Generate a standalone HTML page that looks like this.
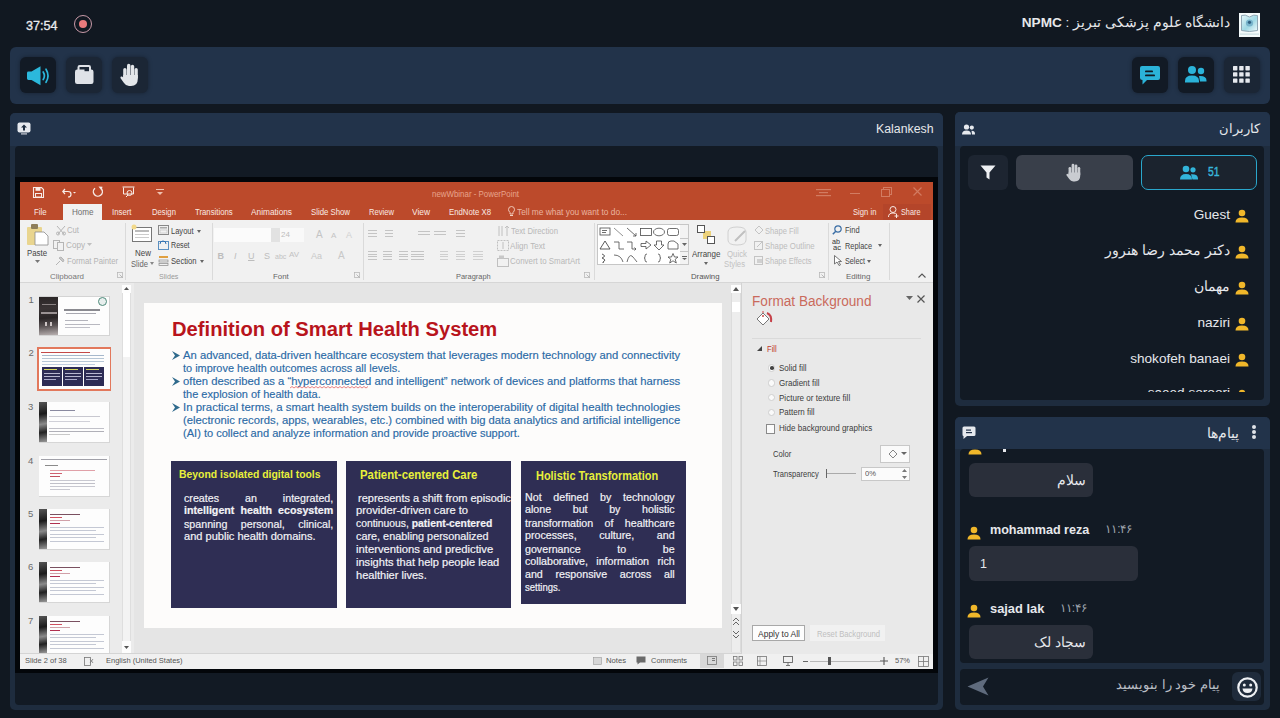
<!DOCTYPE html>
<html><head><meta charset="utf-8">
<style>
*{box-sizing:border-box;margin:0;padding:0}
html,body{width:1280px;height:718px;overflow:hidden;background:#111821;font-family:"Liberation Sans",sans-serif;position:relative}
.a{position:absolute}
.t{position:absolute;white-space:nowrap}
svg{overflow:visible}
</style></head><body>
<div class="t" style="left:26.0px;top:20.1px;font-size:12.5px;line-height:12.5px;color:#e9ebee;transform:scaleX(1.0070);transform-origin:0 0;-webkit-text-stroke:0.3px #e9ebee;">37:54</div>
<div class="a" style="left:74px;top:15px;width:18px;height:18px;border-radius:50%;border:1.6px solid #c99aa8"></div>
<div class="a" style="left:79px;top:20px;width:8px;height:8px;border-radius:50%;background:#e97a7c"></div>
<div class="t" style="right:49.5px;top:14.5px;font-size:13.6px;line-height:16px;color:#e6e8eb;direction:rtl">دانشگاه علوم پزشکی تبریز : <b>NPMC</b></div>
<div class="a" style="left:1239px;top:13px;width:21px;height:24px;background:#f4fafb;"></div>
<svg class="a" style="left:1239px;top:13px;" width="21" height="24" viewBox="0 0 21 24"><defs><linearGradient id="lg" x1="0" y1="0" x2="1" y2="1"><stop offset="0" stop-color="#e4f5f8"/><stop offset=".55" stop-color="#9fd8e4"/><stop offset="1" stop-color="#f0fafc"/></linearGradient></defs><path d="M2.5 2.5 Q6 1 10.5 4 Q15 1 18.5 2.5 V17.5 Q10.5 19.5 2.5 17.5 Z" fill="url(#lg)" stroke="#8fa6b4" stroke-width="1"/><circle cx="10.5" cy="10" r="3.6" fill="#78b4cc"/><circle cx="10.5" cy="9.3" r="1.6" fill="#2e5f80"/><rect x="1" y="20.5" width="19" height="1.2" fill="#c9dde2"/></svg>
<div class="a" style="left:10px;top:47px;width:1260px;height:57px;background:#22334a;border-radius:6px"></div>
<div class="a" style="left:20px;top:57px;width:36px;height:36px;border-radius:6px;background:#121a25;box-shadow:0 0 4px rgba(0,0,0,.35)"></div>
<div class="a" style="left:66px;top:57px;width:36px;height:36px;border-radius:6px;background:#1b2635;box-shadow:0 0 4px rgba(0,0,0,.35)"></div>
<div class="a" style="left:112px;top:57px;width:36px;height:36px;border-radius:6px;background:#1b2635;box-shadow:0 0 4px rgba(0,0,0,.35)"></div>
<div class="a" style="left:1132px;top:57px;width:36px;height:36px;border-radius:6px;background:#121a25;box-shadow:0 0 4px rgba(0,0,0,.35)"></div>
<div class="a" style="left:1178px;top:57px;width:36px;height:36px;border-radius:6px;background:#121a25;box-shadow:0 0 4px rgba(0,0,0,.35)"></div>
<div class="a" style="left:1224px;top:57px;width:36px;height:36px;border-radius:6px;background:#1b2635;box-shadow:0 0 4px rgba(0,0,0,.35)"></div>
<svg class="a" style="left:27px;top:66px;" width="23" height="20" viewBox="0 0 23 20"><path d="M0 7 Q0 5.6 1.4 5.6 H4.5 L13.5 0.3 V19.2 L4.5 13.9 H1.4 Q0 13.9 0 12.5 Z" fill="#2bb8dc"/><path d="M16.2 6 Q18.6 9.75 16.2 13.5" stroke="#2bb8dc" stroke-width="1.7" fill="none" stroke-linecap="round"/><path d="M19 3.2 Q23 9.75 19 16.3" stroke="#2bb8dc" stroke-width="1.7" fill="none" stroke-linecap="round"/></svg>
<svg class="a" style="left:75px;top:65px;" width="19" height="20" viewBox="0 0 19 20"><rect x="0" y="4.5" width="18.5" height="14.5" rx="2.2" fill="#dfe2e7"/><path d="M3.5 5 V2.2 Q3.5 1 4.7 1 H13.8 Q15 1 15 2.2 V5" fill="none" stroke="#dfe2e7" stroke-width="2"/><rect x="9.5" y="3" width="4.5" height="3.2" fill="#1b2635"/></svg>
<svg class="a" style="left:120px;top:63px;" width="20" height="24" viewBox="0 0 20 24"><g fill="#e3e6ea"><rect x="3.2" y="5" width="3.4" height="11" rx="1.7"/><rect x="7" y="0.8" width="3.4" height="14" rx="1.7"/><rect x="10.8" y="1.8" width="3.4" height="13" rx="1.7"/><rect x="14.5" y="5" width="3.3" height="11" rx="1.65"/><path d="M3.2 12 H17.8 V16 Q17.8 23 11 23 H9 Q6 23 4 20 L0.6 15.2 Q0 14 1.2 13.6 Q2.3 13.3 3.2 14.5 Z"/></g></svg>
<svg class="a" style="left:1139px;top:64px;" width="22" height="22" viewBox="0 0 22 22"><path d="M3 2 H19 Q21 2 21 4 V14 Q21 16 19 16 H8 L3.5 20.5 V16 Q1 16 1 14 V4 Q1 2 3 2 Z" fill="#2bb3d9"/><rect x="6" y="6.5" width="8" height="1.8" rx=".9" fill="#121a25"/><rect x="6" y="10.5" width="10" height="1.8" rx=".9" fill="#121a25"/></svg>
<svg class="a" style="left:1184px;top:64px;" width="24" height="22" viewBox="0 0 24 22"><circle cx="8" cy="6" r="4" fill="#2bb3d9"/><circle cx="17" cy="7" r="3.2" fill="#2bb3d9"/><path d="M1 17 Q1 11.5 8 11.5 Q15 11.5 15 17 V18.5 H1 Z" fill="#2bb3d9"/><path d="M15 12 Q22.5 11.5 22.5 16.5 V17.5 H16" fill="#2bb3d9"/></svg>
<svg class="a" style="left:1233px;top:66px;" width="18" height="18" viewBox="0 0 18 18"><rect x="0.0" y="0.0" width="4.4" height="4.4" rx=".6" fill="#e6e9ee"/><rect x="6.2" y="0.0" width="4.4" height="4.4" rx=".6" fill="#e6e9ee"/><rect x="12.4" y="0.0" width="4.4" height="4.4" rx=".6" fill="#e6e9ee"/><rect x="0.0" y="6.2" width="4.4" height="4.4" rx=".6" fill="#e6e9ee"/><rect x="6.2" y="6.2" width="4.4" height="4.4" rx=".6" fill="#e6e9ee"/><rect x="12.4" y="6.2" width="4.4" height="4.4" rx=".6" fill="#e6e9ee"/><rect x="0.0" y="12.4" width="4.4" height="4.4" rx=".6" fill="#e6e9ee"/><rect x="6.2" y="12.4" width="4.4" height="4.4" rx=".6" fill="#e6e9ee"/><rect x="12.4" y="12.4" width="4.4" height="4.4" rx=".6" fill="#e6e9ee"/></svg>
<div class="a" style="left:10px;top:113px;width:933px;height:597px;background:#1e2c3e;border-radius:5px"></div>
<div class="a" style="left:10px;top:113px;width:933px;height:33px;background:#22334a;border-radius:5px 5px 0 0"></div>
<div class="t" style="left:876.0px;top:123.2px;font-size:12px;line-height:12px;color:#e6e8eb;transform:scaleX(1.0260);transform-origin:0 0;">Kalankesh</div>
<svg class="a" style="left:17px;top:122px;" width="14" height="13" viewBox="0 0 14 13"><rect x=".5" y=".5" width="13" height="10" rx="2" fill="#e6e9ee"/><path d="M7 2.5 L10 5.5 H8 V8.5 H6 V5.5 H4 Z" fill="#1e2d40"/><rect x="4" y="11.3" width="6" height="1.2" fill="#c9ced6"/></svg>
<div class="a" style="left:15px;top:146px;width:923px;height:559px;background:#121a24;border-radius:4px"></div>
<div class="a" style="left:15px;top:177px;width:923px;height:496px;background:#03060a;"></div>
<div class="a" style="left:955px;top:112px;width:315px;height:294px;background:#1e2c3e;border-radius:5px"></div>
<div class="a" style="left:955px;top:112px;width:315px;height:34px;background:#22334a;border-radius:5px 5px 0 0"></div>
<div class="a" style="left:960px;top:146px;width:304px;height:254px;background:#121a24;border-radius:4px"></div>
<div class="a" style="left:955px;top:417px;width:315px;height:293px;background:#1e2c3e;border-radius:5px"></div>
<div class="a" style="left:955px;top:417px;width:315px;height:32px;background:#22334a;border-radius:5px 5px 0 0"></div>
<div class="a" style="left:960px;top:449px;width:304px;height:214px;background:#121a24;border-radius:4px"></div>
<div class="a" style="left:960px;top:669px;width:304px;height:36px;background:#121a24;border-radius:4px"></div>
<div class="a" style="left:20px;top:182px;width:913px;height:487px;background:#e4e4e4;"></div>
<div class="a" style="left:20px;top:182px;width:913px;height:38px;background:#bc4a2b;"></div>
<div class="a" style="left:883px;top:204px;width:48px;height:16px;background:#b4452a;"></div>
<div class="a" style="left:63px;top:204px;width:39px;height:16px;background:#f1f1f1;"></div>
<div class="a" style="left:20px;top:220px;width:913px;height:62px;background:#f1f1f1;"></div>
<div class="a" style="left:20px;top:282px;width:913px;height:1px;background:#d6d6d6;"></div>
<svg class="a" style="left:33px;top:187px;" width="11" height="11" viewBox="0 0 11 11"><path d="M.5 .5 H8.5 L10.5 2.5 V10.5 H.5 Z" fill="none" stroke="#f8ece7" stroke-width="1.1"/><rect x="2.5" y=".8" width="5" height="3" fill="#f8ece7"/><rect x="2.5" y="6.5" width="6" height="3.5" fill="none" stroke="#f8ece7" stroke-width="1"/></svg>
<svg class="a" style="left:62px;top:187px;" width="14" height="11" viewBox="0 0 14 11"><path d="M3 2 L.8 4.5 L3 7" fill="none" stroke="#f8ece7" stroke-width="1.2"/><path d="M1 4.5 H6 Q9 4.5 9 7.2 Q9 10 6 10" fill="none" stroke="#f8ece7" stroke-width="1.2"/><path d="M11 5 L12.5 6.5 L14 5" fill="#f8ece7"/></svg>
<svg class="a" style="left:92px;top:186px;" width="12" height="12" viewBox="0 0 12 12"><path d="M3 2.2 A4.5 4.5 0 1 0 9.5 3" fill="none" stroke="#f8ece7" stroke-width="1.4"/><path d="M6.5 .5 L10.5 .8 L9.5 4.5 Z" fill="#f8ece7"/></svg>
<svg class="a" style="left:122px;top:186px;" width="13" height="12" viewBox="0 0 13 12"><rect x=".5" y=".5" width="12" height="1" fill="#f8ece7"/><path d="M1.5 1.5 V8 H11.5 V1.5" fill="none" stroke="#f8ece7" stroke-width="1"/><circle cx="7.5" cy="7" r="2.5" fill="none" stroke="#f8ece7" stroke-width="1"/><path d="M4 11 L6 9" stroke="#f8ece7"/></svg>
<svg class="a" style="left:156px;top:189px;" width="8" height="6" viewBox="0 0 8 6"><rect x="0" y="0" width="8" height="1" fill="#f0c2b0"/><path d="M1 3 H7 L4 6 Z" fill="#f0c2b0"/></svg>
<div class="t" style="left:432.0px;top:189.9px;font-size:8.5px;line-height:8.5px;color:#e8a48c;transform:scaleX(0.9301);transform-origin:0 0;">newWbinar - PowerPoint</div>
<svg class="a" style="left:816px;top:189px;" width="15" height="8" viewBox="0 0 15 8"><rect x="0" y="0" width="15" height="1.2" fill="#d27c62"/><rect x="3" y="3" width="9" height="1.2" fill="#d27c62"/><rect x="0" y="6" width="15" height="1.2" fill="#d27c62"/></svg>
<div class="a" style="left:850px;top:193px;width:10px;height:1px;background:#d27c62;"></div>
<svg class="a" style="left:881px;top:187px;" width="11" height="10" viewBox="0 0 11 10"><rect x="2.5" y=".5" width="8" height="7" fill="none" stroke="#d27c62"/><rect x=".5" y="2.5" width="8" height="7" fill="#bc4a2b" stroke="#d27c62"/></svg>
<svg class="a" style="left:913px;top:187px;" width="9" height="9" viewBox="0 0 9 9"><path d="M.5 .5 L8.5 8.5 M8.5 .5 L.5 8.5" stroke="#d27c62" stroke-width="1.1"/></svg>
<div class="t" style="left:34.0px;top:208.4px;font-size:8.5px;line-height:8.5px;color:#f9e9e3;transform:scaleX(0.9199);transform-origin:0 0;">File</div>
<div class="t" style="left:72.0px;top:208.4px;font-size:8.5px;line-height:8.5px;color:#6e6e6e;transform:scaleX(0.9526);transform-origin:0 0;">Home</div>
<div class="t" style="left:112.0px;top:208.4px;font-size:8.5px;line-height:8.5px;color:#f9e9e3;transform:scaleX(0.9173);transform-origin:0 0;">Insert</div>
<div class="t" style="left:151.5px;top:208.4px;font-size:8.5px;line-height:8.5px;color:#f9e9e3;transform:scaleX(0.9033);transform-origin:0 0;">Design</div>
<div class="t" style="left:194.8px;top:208.4px;font-size:8.5px;line-height:8.5px;color:#f9e9e3;transform:scaleX(0.9138);transform-origin:0 0;">Transitions</div>
<div class="t" style="left:251.0px;top:208.4px;font-size:8.5px;line-height:8.5px;color:#f9e9e3;transform:scaleX(0.9751);transform-origin:0 0;">Animations</div>
<div class="t" style="left:311.0px;top:208.4px;font-size:8.5px;line-height:8.5px;color:#f9e9e3;transform:scaleX(0.9171);transform-origin:0 0;">Slide Show</div>
<div class="t" style="left:369.0px;top:208.4px;font-size:8.5px;line-height:8.5px;color:#f9e9e3;transform:scaleX(0.8970);transform-origin:0 0;">Review</div>
<div class="t" style="left:412.0px;top:208.4px;font-size:8.5px;line-height:8.5px;color:#f9e9e3;transform:scaleX(0.9852);transform-origin:0 0;">View</div>
<div class="t" style="left:449.0px;top:208.4px;font-size:8.5px;line-height:8.5px;color:#f9e9e3;transform:scaleX(0.9163);transform-origin:0 0;">EndNote X8</div>
<svg class="a" style="left:508px;top:206px;" width="7" height="11" viewBox="0 0 7 11"><path d="M3.5 .5 Q6.5 .5 6.5 3.5 Q6.5 5 5 6.5 V8 H2 V6.5 Q.5 5 .5 3.5 Q.5 .5 3.5 .5 Z" fill="none" stroke="#f4d2c4" stroke-width=".9"/><rect x="2" y="9" width="3" height="1" fill="#f4d2c4"/></svg>
<div class="t" style="left:517.0px;top:208.4px;font-size:8.5px;line-height:8.5px;color:#eab4a0;transform:scaleX(0.9824);transform-origin:0 0;">Tell me what you want to do...</div>
<div class="t" style="left:852.6px;top:208.4px;font-size:8.5px;line-height:8.5px;color:#f9e9e3;transform:scaleX(0.9003);transform-origin:0 0;">Sign in</div>
<svg class="a" style="left:888px;top:206px;" width="11" height="12" viewBox="0 0 11 12"><circle cx="5" cy="3.5" r="3" fill="none" stroke="#f9e9e3" stroke-width="1"/><path d="M.5 11 Q.5 7 5 7 Q8 7 9 8.5" fill="none" stroke="#f9e9e3" stroke-width="1"/><path d="M8.5 8 V12 M6.5 10 H10.5" stroke="#f9e9e3" stroke-width="1"/></svg>
<div class="t" style="left:900.5px;top:208.4px;font-size:8.5px;line-height:8.5px;color:#f9e9e3;transform:scaleX(0.8597);transform-origin:0 0;">Share</div>
<div class="a" style="left:125px;top:223px;width:1px;height:57px;background:#dadada;"></div>
<div class="a" style="left:211.5px;top:223px;width:1.0px;height:57px;background:#dadada;"></div>
<div class="a" style="left:363px;top:223px;width:1px;height:57px;background:#dadada;"></div>
<div class="a" style="left:593.5px;top:223px;width:1.0px;height:57px;background:#dadada;"></div>
<div class="a" style="left:827.5px;top:223px;width:1.0px;height:57px;background:#dadada;"></div>
<div class="a" style="left:888.5px;top:223px;width:1.0px;height:57px;background:#dadada;"></div>
<div class="t" style="left:50.0px;top:272.7px;font-size:8px;line-height:8px;color:#777;transform:scaleX(0.9929);transform-origin:0 0;">Clipboard</div>
<div class="t" style="left:158.6px;top:272.7px;font-size:8px;line-height:8px;color:#9a9a9a;transform:scaleX(0.8903);transform-origin:0 0;">Slides</div>
<div class="t" style="left:272.8px;top:272.7px;font-size:8px;line-height:8px;color:#666;transform:scaleX(0.9870);transform-origin:0 0;">Font</div>
<div class="t" style="left:455.7px;top:272.7px;font-size:8px;line-height:8px;color:#666;transform:scaleX(0.9288);transform-origin:0 0;">Paragraph</div>
<div class="t" style="left:691.0px;top:272.7px;font-size:8px;line-height:8px;color:#555;transform:scaleX(0.9712);transform-origin:0 0;">Drawing</div>
<div class="t" style="left:845.6px;top:272.7px;font-size:8px;line-height:8px;color:#666;transform:scaleX(0.9975);transform-origin:0 0;">Editing</div>
<svg class="a" style="left:117px;top:272px;" width="7" height="7" viewBox="0 0 7 7"><rect x=".5" y=".5" width="5" height="5" fill="none" stroke="#b8b8b8" stroke-width=".8"/><path d="M2.5 2.5 L6 6" stroke="#b8b8b8"/></svg>
<svg class="a" style="left:354px;top:272px;" width="7" height="7" viewBox="0 0 7 7"><rect x=".5" y=".5" width="5" height="5" fill="none" stroke="#b8b8b8" stroke-width=".8"/><path d="M2.5 2.5 L6 6" stroke="#b8b8b8"/></svg>
<svg class="a" style="left:584px;top:272px;" width="7" height="7" viewBox="0 0 7 7"><rect x=".5" y=".5" width="5" height="5" fill="none" stroke="#b8b8b8" stroke-width=".8"/><path d="M2.5 2.5 L6 6" stroke="#b8b8b8"/></svg>
<svg class="a" style="left:819px;top:272px;" width="7" height="7" viewBox="0 0 7 7"><rect x=".5" y=".5" width="5" height="5" fill="none" stroke="#b8b8b8" stroke-width=".8"/><path d="M2.5 2.5 L6 6" stroke="#b8b8b8"/></svg>
<svg class="a" style="left:918px;top:273px;" width="8" height="5" viewBox="0 0 8 5"><path d="M.5 4.5 L4 1 L7.5 4.5" fill="none" stroke="#555" stroke-width="1.1"/></svg>
<svg class="a" style="left:26px;top:223px;" width="23" height="23" viewBox="0 0 23 23"><rect x="1" y="4" width="15" height="18" rx="1" fill="#e9d58f"/><rect x="5" y="1" width="7" height="5" rx="1" fill="#8e7e5a"/><path d="M9 9 H18 L22 13 V22 H9 Z" fill="#fff" stroke="#8a8a8a" stroke-width=".8"/></svg>
<div class="t" style="left:27.0px;top:249.4px;font-size:8.5px;line-height:8.5px;color:#444444;transform:scaleX(0.9201);transform-origin:0 0;">Paste</div>
<svg class="a" style="left:35px;top:260px;" width="5" height="4" viewBox="0 0 5 4"><path d="M0 0 H5 L2.5 3 Z" fill="#777"/></svg>
<svg class="a" style="left:56px;top:225px;" width="10" height="10" viewBox="0 0 10 10"><path d="M1 1 L8 9 M9 1 L2 9" stroke="#b5b5b5" stroke-width="1"/><circle cx="2" cy="8.5" r="1.5" fill="none" stroke="#b5b5b5"/><circle cx="8" cy="8.5" r="1.5" fill="none" stroke="#b5b5b5"/></svg>
<div class="t" style="left:67.0px;top:226.4px;font-size:8.5px;line-height:8.5px;color:#b3b3b3;transform:scaleX(0.9072);transform-origin:0 0;">Cut</div>
<svg class="a" style="left:53px;top:240px;" width="11" height="11" viewBox="0 0 11 11"><rect x=".5" y=".5" width="6" height="8" fill="none" stroke="#b5b5b5"/><rect x="4.5" y="2.5" width="6" height="8" fill="#f1f1f1" stroke="#b5b5b5"/></svg>
<div class="t" style="left:66.0px;top:241.4px;font-size:8.5px;line-height:8.5px;color:#b3b3b3;transform:scaleX(0.9575);transform-origin:0 0;">Copy</div>
<svg class="a" style="left:87px;top:243px;" width="5" height="4" viewBox="0 0 5 4"><path d="M0 0 H5 L2.5 3 Z" fill="#c0c0c0"/></svg>
<svg class="a" style="left:55px;top:256px;" width="10" height="10" viewBox="0 0 10 10"><path d="M1 9 L5 5 M4 2 L8 6 L9 4 L6 1 Z" stroke="#b5b5b5" fill="#c8c8c8"/></svg>
<div class="t" style="left:67.0px;top:256.9px;font-size:8.5px;line-height:8.5px;color:#b3b3b3;transform:scaleX(0.9072);transform-origin:0 0;">Format Painter</div>
<svg class="a" style="left:132px;top:225px;" width="21" height="18" viewBox="0 0 21 18"><rect x=".5" y="2.5" width="19" height="14" fill="#fff" stroke="#777"/><rect x="3" y="5" width="14" height="2" fill="#bbb"/><rect x="3" y="9" width="14" height="1" fill="#ccc"/><rect x="3" y="12" width="14" height="1" fill="#ccc"/><circle cx="2" cy="2" r="2.5" fill="#f2d98a"/></svg>
<div class="t" style="left:134.6px;top:249.4px;font-size:8.5px;line-height:8.5px;color:#444444;transform:scaleX(0.9350);transform-origin:0 0;">New</div>
<div class="t" style="left:131.0px;top:259.6px;font-size:8.5px;line-height:8.5px;color:#666;transform:scaleX(0.8994);transform-origin:0 0;">Slide</div>
<svg class="a" style="left:150px;top:262px;" width="4" height="3" viewBox="0 0 4 3"><path d="M0 0 H4 L2 3 Z" fill="#888"/></svg>
<svg class="a" style="left:158px;top:225px;" width="11" height="10" viewBox="0 0 11 10"><rect x=".5" y=".5" width="10" height="9" fill="none" stroke="#888"/><rect x="2" y="2" width="7" height="1.5" fill="#aaa"/><rect x="2" y="5" width="7" height="3" fill="none" stroke="#bbb" stroke-width=".6"/></svg>
<div class="t" style="left:171.4px;top:226.5px;font-size:8.5px;line-height:8.5px;color:#444444;transform:scaleX(0.8855);transform-origin:0 0;">Layout</div>
<svg class="a" style="left:197px;top:230px;" width="4" height="3" viewBox="0 0 4 3"><path d="M0 0 H4 L2 3 Z" fill="#666"/></svg>
<svg class="a" style="left:158px;top:240px;" width="11" height="10" viewBox="0 0 11 10"><rect x=".5" y="1.5" width="10" height="8" fill="none" stroke="#5a8fc0"/><path d="M2 4 A3 3 0 0 1 8 4" fill="none" stroke="#2f6fb0"/></svg>
<div class="t" style="left:171.4px;top:241.3px;font-size:8.5px;line-height:8.5px;color:#444444;transform:scaleX(0.8377);transform-origin:0 0;">Reset</div>
<svg class="a" style="left:158px;top:255px;" width="11" height="11" viewBox="0 0 11 11"><rect x="1" y="1" width="9" height="2" fill="#e0a040"/><rect x="1" y="5" width="9" height="2" fill="none" stroke="#888" stroke-width=".7"/><rect x="1" y="8.5" width="9" height="2" fill="none" stroke="#888" stroke-width=".7"/></svg>
<div class="t" style="left:171.4px;top:256.9px;font-size:8.5px;line-height:8.5px;color:#444444;transform:scaleX(0.9029);transform-origin:0 0;">Section</div>
<svg class="a" style="left:200px;top:260px;" width="4" height="3" viewBox="0 0 4 3"><path d="M0 0 H4 L2 3 Z" fill="#666"/></svg>
<div class="a" style="left:214px;top:228px;width:66px;height:14px;background:#fbfbfb;"></div>
<div class="a" style="left:271px;top:228px;width:9px;height:14px;background:#e2e2e2;"></div>
<div class="a" style="left:280px;top:228px;width:24px;height:14px;background:#f9f9f9;"></div>
<div class="t" style="left:281.0px;top:231.2px;font-size:8px;line-height:8px;color:#bdbdbd;">24</div>
<div class="t" style="left:316.0px;top:230.2px;font-size:10px;line-height:10px;color:#c4c4c4;">A</div>
<div class="t" style="left:331.0px;top:232.2px;font-size:8px;line-height:8px;color:#c4c4c4;">A</div>
<div class="t" style="left:346.0px;top:230.7px;font-size:9px;line-height:9px;color:#d0d0d0;">A</div>
<div class="t" style="left:217.5px;top:251.7px;font-size:9px;line-height:9px;color:#bdbdbd;font-weight:bold;">B</div>
<div class="t" style="left:234.0px;top:251.7px;font-size:9px;line-height:9px;color:#bdbdbd;font-style:italic;">I</div>
<div class="t" style="left:248.0px;top:251.7px;font-size:9px;line-height:9px;color:#bdbdbd;text-decoration:underline;">U</div>
<div class="t" style="left:264.0px;top:251.7px;font-size:9px;line-height:9px;color:#bdbdbd;">S</div>
<div class="t" style="left:275.0px;top:252.6px;font-size:7px;line-height:7px;color:#c2c2c2;">abc</div>
<div class="t" style="left:289.0px;top:251.2px;font-size:8px;line-height:8px;color:#c2c2c2;">AV</div>
<div class="t" style="left:311.0px;top:251.7px;font-size:9px;line-height:9px;color:#c8c8c8;">Aa</div>
<div class="t" style="left:338.0px;top:251.2px;font-size:10px;line-height:10px;color:#c8c8c8;">A</div>
<div class="a" style="left:368px;top:230px;width:9px;height:1px;background:#c4c4c4;"></div>
<div class="a" style="left:368px;top:233px;width:9px;height:1px;background:#c4c4c4;"></div>
<div class="a" style="left:368px;top:236px;width:9px;height:1px;background:#c4c4c4;"></div>
<div class="a" style="left:385px;top:230px;width:8px;height:1px;background:#c4c4c4;"></div>
<div class="a" style="left:385px;top:233px;width:8px;height:1px;background:#c4c4c4;"></div>
<div class="a" style="left:385px;top:236px;width:8px;height:1px;background:#c4c4c4;"></div>
<div class="a" style="left:418px;top:231px;width:12px;height:1px;background:#c4c4c4;"></div>
<div class="a" style="left:418px;top:234px;width:12px;height:1px;background:#c4c4c4;"></div>
<div class="a" style="left:434px;top:231px;width:12px;height:1px;background:#c4c4c4;"></div>
<div class="a" style="left:434px;top:234px;width:12px;height:1px;background:#c4c4c4;"></div>
<div class="a" style="left:456px;top:230px;width:9px;height:1px;background:#c4c4c4;"></div>
<div class="a" style="left:456px;top:233px;width:9px;height:1px;background:#c4c4c4;"></div>
<div class="a" style="left:456px;top:236px;width:9px;height:1px;background:#c4c4c4;"></div>
<div class="a" style="left:368px;top:251.0px;width:9px;height:1.0px;background:#c4c4c4;"></div>
<div class="a" style="left:368px;top:253.5px;width:9px;height:1.0px;background:#c4c4c4;"></div>
<div class="a" style="left:368px;top:256.0px;width:9px;height:1.0px;background:#c4c4c4;"></div>
<div class="a" style="left:368px;top:258.5px;width:9px;height:1.0px;background:#c4c4c4;"></div>
<div class="a" style="left:383px;top:251.0px;width:9px;height:1.0px;background:#c4c4c4;"></div>
<div class="a" style="left:383px;top:253.5px;width:9px;height:1.0px;background:#c4c4c4;"></div>
<div class="a" style="left:383px;top:256.0px;width:9px;height:1.0px;background:#c4c4c4;"></div>
<div class="a" style="left:383px;top:258.5px;width:9px;height:1.0px;background:#c4c4c4;"></div>
<div class="a" style="left:399px;top:251.0px;width:9px;height:1.0px;background:#c4c4c4;"></div>
<div class="a" style="left:399px;top:253.5px;width:9px;height:1.0px;background:#c4c4c4;"></div>
<div class="a" style="left:399px;top:256.0px;width:9px;height:1.0px;background:#c4c4c4;"></div>
<div class="a" style="left:399px;top:258.5px;width:9px;height:1.0px;background:#c4c4c4;"></div>
<div class="a" style="left:411px;top:251.0px;width:13px;height:1.0px;background:#c4c4c4;"></div>
<div class="a" style="left:411px;top:253.5px;width:13px;height:1.0px;background:#c4c4c4;"></div>
<div class="a" style="left:411px;top:256.0px;width:13px;height:1.0px;background:#c4c4c4;"></div>
<div class="a" style="left:411px;top:258.5px;width:13px;height:1.0px;background:#c4c4c4;"></div>
<div class="a" style="left:440px;top:251.0px;width:8px;height:1.0px;background:#cfcfcf;"></div>
<div class="a" style="left:440px;top:253.5px;width:8px;height:1.0px;background:#cfcfcf;"></div>
<div class="a" style="left:440px;top:256.0px;width:8px;height:1.0px;background:#cfcfcf;"></div>
<div class="a" style="left:440px;top:258.5px;width:8px;height:1.0px;background:#cfcfcf;"></div>
<div class="a" style="left:456px;top:251.0px;width:9px;height:1.0px;background:#cfcfcf;"></div>
<div class="a" style="left:456px;top:253.5px;width:9px;height:1.0px;background:#cfcfcf;"></div>
<div class="a" style="left:456px;top:256.0px;width:9px;height:1.0px;background:#cfcfcf;"></div>
<div class="a" style="left:456px;top:258.5px;width:9px;height:1.0px;background:#cfcfcf;"></div>
<div class="a" style="left:473px;top:251.0px;width:10px;height:1.0px;background:#d0d0d0;"></div>
<div class="a" style="left:473px;top:253.5px;width:10px;height:1.0px;background:#d0d0d0;"></div>
<div class="a" style="left:473px;top:256.0px;width:10px;height:1.0px;background:#d0d0d0;"></div>
<div class="a" style="left:473px;top:258.5px;width:10px;height:1.0px;background:#d0d0d0;"></div>
<svg class="a" style="left:497px;top:225px;" width="12" height="12" viewBox="0 0 12 12"><path d="M2 1 V11 M5 1 V11 M8 3 L10 1 L12 3 M10 1 V11" stroke="#c0c0c0" fill="none"/></svg>
<div class="t" style="left:511.0px;top:226.7px;font-size:8.5px;line-height:8.5px;color:#b8b8b8;transform:scaleX(0.9128);transform-origin:0 0;">Text Direction</div>
<svg class="a" style="left:497px;top:240px;" width="12" height="11" viewBox="0 0 12 11"><rect x=".5" y=".5" width="11" height="10" fill="none" stroke="#c0c0c0" stroke-dasharray="2 1"/><path d="M6 2 V9" stroke="#c0c0c0"/></svg>
<div class="t" style="left:510.0px;top:241.7px;font-size:8.5px;line-height:8.5px;color:#b8b8b8;transform:scaleX(0.9537);transform-origin:0 0;">Align Text</div>
<svg class="a" style="left:497px;top:255px;" width="12" height="12" viewBox="0 0 12 12"><rect x=".5" y="3.5" width="11" height="8" fill="none" stroke="#c0c0c0"/><rect x="2" y=".5" width="5" height="3" fill="#c8c8c8"/></svg>
<div class="t" style="left:510.0px;top:257.4px;font-size:8.5px;line-height:8.5px;color:#b8b8b8;transform:scaleX(0.9320);transform-origin:0 0;">Convert to SmartArt</div>
<div class="a" style="left:597px;top:224px;width:92px;height:41px;background:#c6c6c6;"></div>
<div class="a" style="left:598px;top:225px;width:82px;height:39px;background:#ffffff;"></div>
<div class="a" style="left:680px;top:225px;width:8px;height:39px;background:#f3f3f3;"></div>
<div class="a" style="left:680px;top:238px;width:8px;height:1px;background:#c6c6c6;"></div>
<div class="a" style="left:680px;top:251px;width:8px;height:1px;background:#c6c6c6;"></div>
<svg class="a" style="left:682px;top:243px;" width="5" height="3" viewBox="0 0 5 3"><path d="M0 0 H5 L2.5 3 Z" fill="#666"/></svg>
<svg class="a" style="left:682px;top:256px;" width="5" height="4" viewBox="0 0 5 4"><rect x="0" y="0" width="5" height="1" fill="#666"/><path d="M0 2 H5 L2.5 4 Z" fill="#666"/></svg>
<svg class="a" style="left:599.0px;top:227px;" width="12" height="10" viewBox="0 0 12 10"><rect x="1" y="1" width="10" height="7" fill="none" stroke="#4a4a4a" stroke-width=".8"/><path d="M3 3.5 H8 M3 5.5 H7" stroke="#4a4a4a" stroke-width=".8"/></svg>
<svg class="a" style="left:612.5px;top:227px;" width="12" height="10" viewBox="0 0 12 10"><path d="M1 1 L10 9" stroke="#777" stroke-width=".8"/></svg>
<svg class="a" style="left:626.0px;top:227px;" width="12" height="10" viewBox="0 0 12 10"><path d="M1 1 L10 9 M7 9 H10 V6" stroke="#4a4a4a" stroke-width=".8" fill="none"/></svg>
<svg class="a" style="left:639.5px;top:227px;" width="12" height="10" viewBox="0 0 12 10"><rect x=".5" y="1.5" width="11" height="7" fill="none" stroke="#4a4a4a" stroke-width=".8"/></svg>
<svg class="a" style="left:653.0px;top:227px;" width="12" height="10" viewBox="0 0 12 10"><ellipse cx="6" cy="5" rx="5.5" ry="3.8" fill="none" stroke="#4a4a4a" stroke-width=".8"/></svg>
<svg class="a" style="left:666.5px;top:227px;" width="12" height="10" viewBox="0 0 12 10"><rect x=".5" y="1.5" width="11" height="7" rx="2" fill="none" stroke="#4a4a4a" stroke-width=".8"/></svg>
<svg class="a" style="left:599.0px;top:240px;" width="12" height="10" viewBox="0 0 12 10"><path d="M6 1 L11 9 H1 Z" fill="none" stroke="#4a4a4a" stroke-width=".9"/></svg>
<svg class="a" style="left:612.5px;top:240px;" width="12" height="10" viewBox="0 0 12 10"><path d="M1 2 H6 V9 H11" fill="none" stroke="#4a4a4a" stroke-width=".8"/></svg>
<svg class="a" style="left:626.0px;top:240px;" width="12" height="10" viewBox="0 0 12 10"><path d="M1 2 H6 V9 H10 M8.5 7.5 L10 9 L8.5 10.5" fill="none" stroke="#4a4a4a" stroke-width=".8"/></svg>
<svg class="a" style="left:639.5px;top:240px;" width="12" height="10" viewBox="0 0 12 10"><path d="M1 3.5 H6 V1 L11 5 L6 9 V6.5 H1 Z" fill="none" stroke="#4a4a4a" stroke-width=".8"/></svg>
<svg class="a" style="left:653.0px;top:240px;" width="12" height="10" viewBox="0 0 12 10"><path d="M3.5 1 H8.5 V5 H11 L6 10 L1 5 H3.5 Z" fill="none" stroke="#4a4a4a" stroke-width=".8"/></svg>
<svg class="a" style="left:666.5px;top:240px;" width="12" height="10" viewBox="0 0 12 10"><path d="M1 9 V4 Q1 1 4 1 H7 L11 4 V9 Z" fill="none" stroke="#4a4a4a" stroke-width=".8"/></svg>
<svg class="a" style="left:599.0px;top:253px;" width="12" height="10" viewBox="0 0 12 10"><path d="M3 1 Q8 3 3 5 Q8 7 4 9 Q3 10 5 9" fill="none" stroke="#4a4a4a" stroke-width=".9"/></svg>
<svg class="a" style="left:612.5px;top:253px;" width="12" height="10" viewBox="0 0 12 10"><path d="M1 2 Q8 2 10 9" fill="none" stroke="#4a4a4a" stroke-width=".8"/></svg>
<svg class="a" style="left:626.0px;top:253px;" width="12" height="10" viewBox="0 0 12 10"><path d="M1 9 Q3 1 6 3 Q8 5 11 9" fill="none" stroke="#4a4a4a" stroke-width=".8"/></svg>
<svg class="a" style="left:639.5px;top:253px;" width="12" height="10" viewBox="0 0 12 10"><path d="M7 1 Q5 1 5 3 V4 Q5 5 4 5 Q5 5 5 6 V7 Q5 9 7 9" fill="none" stroke="#4a4a4a" stroke-width=".8"/></svg>
<svg class="a" style="left:653.0px;top:253px;" width="12" height="10" viewBox="0 0 12 10"><path d="M5 1 Q7 1 7 3 V4 Q7 5 8 5 Q7 5 7 6 V7 Q7 9 5 9" fill="none" stroke="#4a4a4a" stroke-width=".8"/></svg>
<svg class="a" style="left:666.5px;top:253px;" width="12" height="10" viewBox="0 0 12 10"><path d="M6 .5 L7.5 4 L11 4 L8.2 6.3 L9.3 10 L6 7.8 L2.7 10 L3.8 6.3 L1 4 L4.5 4 Z" fill="none" stroke="#4a4a4a" stroke-width=".8"/></svg>
<svg class="a" style="left:697px;top:225px;" width="18" height="19" viewBox="0 0 18 19"><rect x="6" y="6" width="8" height="8" fill="#edd27a"/><rect x=".5" y=".5" width="7" height="7" fill="#fff" stroke="#555"/><rect x="10.5" y="11.5" width="7" height="7" fill="#fff" stroke="#555"/></svg>
<div class="t" style="left:692.0px;top:249.5px;font-size:8.5px;line-height:8.5px;color:#444444;transform:scaleX(0.9391);transform-origin:0 0;">Arrange</div>
<svg class="a" style="left:704px;top:262px;" width="4" height="3" viewBox="0 0 4 3"><path d="M0 0 H4 L2 3 Z" fill="#666"/></svg>
<svg class="a" style="left:726px;top:226px;" width="22" height="20" viewBox="0 0 22 20"><path d="M2 6 Q2 1 11 1 Q20 1 20 6 V14 Q20 19 11 19 Q2 19 2 14 Z" fill="none" stroke="#d0d0d0"/><path d="M9 15 L19 5" stroke="#c0c0c0" stroke-width="2"/></svg>
<div class="t" style="left:727.0px;top:249.5px;font-size:8.5px;line-height:8.5px;color:#c2c2c2;transform:scaleX(0.9205);transform-origin:0 0;">Quick</div>
<div class="t" style="left:724.0px;top:259.5px;font-size:8.5px;line-height:8.5px;color:#c2c2c2;transform:scaleX(0.9072);transform-origin:0 0;">Styles</div>
<svg class="a" style="left:754px;top:225px;" width="10" height="10" viewBox="0 0 10 10"><path d="M1 5 L5 1 L9 5 L5 9 Z" fill="none" stroke="#c4c4c4"/></svg>
<div class="t" style="left:765.4px;top:226.7px;font-size:8.5px;line-height:8.5px;color:#bdbdbd;transform:scaleX(0.8889);transform-origin:0 0;">Shape Fill</div>
<svg class="a" style="left:754px;top:240px;" width="10" height="10" viewBox="0 0 10 10"><rect x=".5" y="1.5" width="8" height="8" fill="none" stroke="#c4c4c4"/><path d="M3 7 L9 1" stroke="#c4c4c4"/></svg>
<div class="t" style="left:765.4px;top:241.7px;font-size:8.5px;line-height:8.5px;color:#bdbdbd;transform:scaleX(0.9207);transform-origin:0 0;">Shape Outline</div>
<svg class="a" style="left:754px;top:255px;" width="10" height="10" viewBox="0 0 10 10"><rect x=".5" y="1.5" width="8" height="8" fill="none" stroke="#c4c4c4"/><rect x="3" y="4" width="5" height="4" fill="#d0d0d0"/></svg>
<div class="t" style="left:765.4px;top:257.4px;font-size:8.5px;line-height:8.5px;color:#bdbdbd;transform:scaleX(0.8831);transform-origin:0 0;">Shape Effects</div>
<svg class="a" style="left:832px;top:225px;" width="10" height="10" viewBox="0 0 10 10"><circle cx="6" cy="4" r="3.2" fill="none" stroke="#3b6ea5" stroke-width="1.2"/><path d="M3.8 6.2 L.8 9.2" stroke="#3b6ea5" stroke-width="1.5"/></svg>
<div class="t" style="left:844.8px;top:226.3px;font-size:8.5px;line-height:8.5px;color:#444444;transform:scaleX(0.8829);transform-origin:0 0;">Find</div>
<div class="t" style="left:832.0px;top:239.4px;font-size:6.5px;line-height:6.5px;color:#333;transform:scaleX(1.1065);transform-origin:0 0;">ab</div>
<div class="t" style="left:833.0px;top:244.9px;font-size:6.5px;line-height:6.5px;color:#333;transform:scaleX(1.1653);transform-origin:0 0;">ac</div>
<div class="t" style="left:845.0px;top:241.5px;font-size:8.5px;line-height:8.5px;color:#444444;transform:scaleX(0.8657);transform-origin:0 0;">Replace</div>
<svg class="a" style="left:878px;top:244px;" width="4" height="3" viewBox="0 0 4 3"><path d="M0 0 H4 L2 3 Z" fill="#666"/></svg>
<svg class="a" style="left:834px;top:255px;" width="8" height="11" viewBox="0 0 8 11"><path d="M.5 .5 V9 L3 7 L5 10.5 L6.5 9.8 L4.5 6.5 H7.5 Z" fill="#fff" stroke="#555" stroke-width=".8"/></svg>
<div class="t" style="left:845.0px;top:256.9px;font-size:8.5px;line-height:8.5px;color:#444444;transform:scaleX(0.8466);transform-origin:0 0;">Select</div>
<svg class="a" style="left:867px;top:260px;" width="4" height="3" viewBox="0 0 4 3"><path d="M0 0 H4 L2 3 Z" fill="#666"/></svg>
<div class="a" style="left:20px;top:283px;width:114px;height:371px;background:#ebebeb;"></div>
<div class="a" style="left:122px;top:285px;width:9px;height:367px;background:#f3f3f3;"></div>
<div class="a" style="left:122px;top:285px;width:1px;height:367px;background:#dedede;"></div>
<div class="a" style="left:130px;top:285px;width:1px;height:367px;background:#dedede;"></div>
<div class="a" style="left:122px;top:285px;width:9px;height:8px;background:#fdfdfd;"></div>
<svg class="a" style="left:124px;top:287px;" width="5" height="3" viewBox="0 0 5 3"><path d="M0 3 L2.5 0 L5 3 Z" fill="#555"/></svg>
<div class="a" style="left:123px;top:293px;width:7px;height:64px;background:#ffffff;"></div>
<div class="a" style="left:122px;top:641px;width:9px;height:12px;background:#fdfdfd;"></div>
<svg class="a" style="left:124px;top:646px;" width="5" height="3" viewBox="0 0 5 3"><path d="M0 0 L2.5 3 L5 0 Z" fill="#555"/></svg>
<div class="a" style="left:134px;top:283px;width:608px;height:371px;background:#e5e5e5;"></div>
<div class="a" style="left:731px;top:285px;width:10px;height:367px;background:#ededed;"></div>
<div class="a" style="left:731px;top:285px;width:1px;height:367px;background:#dcdcdc;"></div>
<div class="a" style="left:740px;top:285px;width:1px;height:367px;background:#dcdcdc;"></div>
<div class="a" style="left:731px;top:285px;width:10px;height:8px;background:#fdfdfd;"></div>
<svg class="a" style="left:733px;top:287px;" width="6" height="4" viewBox="0 0 6 4"><path d="M0 4 L3 0 L6 4 Z" fill="#555"/></svg>
<div class="a" style="left:732px;top:302px;width:8px;height:10px;background:#ffffff;"></div>
<div class="a" style="left:731px;top:604px;width:10px;height:10px;background:#fdfdfd;"></div>
<svg class="a" style="left:733px;top:607px;" width="6" height="4" viewBox="0 0 6 4"><path d="M0 0 L3 4 L6 0 Z" fill="#555"/></svg>
<svg class="a" style="left:733px;top:618px;" width="6" height="8" viewBox="0 0 6 8"><path d="M0 3 L3 0 L6 3 M0 7 L3 4 L6 7" fill="none" stroke="#666" stroke-width="1"/></svg>
<svg class="a" style="left:733px;top:630px;" width="6" height="8" viewBox="0 0 6 8"><path d="M0 1 L3 4 L6 1 M0 5 L3 8 L6 5" fill="none" stroke="#666" stroke-width="1"/></svg>
<div class="a" style="left:20px;top:654px;width:913px;height:15px;background:#f0f0f0;"></div>
<div class="a" style="left:20px;top:653px;width:913px;height:1px;background:#d4d4d4;"></div>
<div class="t" style="left:25.3px;top:657.4px;font-size:8px;line-height:8px;color:#555;transform:scaleX(0.9376);transform-origin:0 0;">Slide 2 of 38</div>
<svg class="a" style="left:84px;top:656px;" width="10" height="10" viewBox="0 0 10 10"><rect x=".5" y="1.5" width="6" height="8" fill="none" stroke="#777" stroke-width=".8"/><path d="M6 3 L9 7 M9 3 L6 7" stroke="#777" stroke-width=".8"/></svg>
<div class="t" style="left:105.8px;top:657.4px;font-size:8px;line-height:8px;color:#555;transform:scaleX(0.9362);transform-origin:0 0;">English (United States)</div>
<svg class="a" style="left:593px;top:656px;" width="9" height="9" viewBox="0 0 9 9"><rect x=".5" y="1.5" width="8" height="7" fill="#d6d6d6" stroke="#999" stroke-width=".6"/></svg>
<div class="t" style="left:606.0px;top:657.4px;font-size:8px;line-height:8px;color:#555;transform:scaleX(0.9570);transform-origin:0 0;">Notes</div>
<svg class="a" style="left:636px;top:656px;" width="10" height="9" viewBox="0 0 10 9"><path d="M.5 .5 H9.5 V6.5 H4 L1.5 8.5 V6.5 H.5 Z" fill="#6a6a6a"/></svg>
<div class="t" style="left:651.0px;top:657.4px;font-size:8px;line-height:8px;color:#555;transform:scaleX(0.9308);transform-origin:0 0;">Comments</div>
<div class="a" style="left:700px;top:654px;width:24px;height:14px;background:#d8d8d8;"></div>
<svg class="a" style="left:707px;top:656px;" width="10" height="9" viewBox="0 0 10 9"><rect x=".5" y=".5" width="9" height="8" fill="none" stroke="#777" stroke-width=".8"/><rect x="5" y="2" width="3" height="1" fill="#777"/><rect x="5" y="4" width="3" height="1" fill="#777"/></svg>
<svg class="a" style="left:733px;top:656px;" width="10" height="10" viewBox="0 0 10 10"><rect x=".5" y=".5" width="3.5" height="3.5" fill="none" stroke="#777" stroke-width=".8"/><rect x="6" y=".5" width="3.5" height="3.5" fill="none" stroke="#777" stroke-width=".8"/><rect x=".5" y="6" width="3.5" height="3.5" fill="none" stroke="#777" stroke-width=".8"/><rect x="6" y="6" width="3.5" height="3.5" fill="none" stroke="#777" stroke-width=".8"/></svg>
<svg class="a" style="left:757px;top:656px;" width="10" height="10" viewBox="0 0 10 10"><rect x=".5" y=".5" width="9" height="9" fill="none" stroke="#777" stroke-width=".8"/><path d="M3 .5 V9.5 M.5 5 H9.5" stroke="#777" stroke-width=".6"/></svg>
<svg class="a" style="left:783px;top:656px;" width="10" height="10" viewBox="0 0 10 10"><rect x=".5" y=".5" width="9" height="6" fill="none" stroke="#666" stroke-width=".9"/><path d="M5 6.5 V9 M3 9.5 H7" stroke="#666" stroke-width=".9"/></svg>
<div class="a" style="left:803px;top:661px;width:5px;height:1px;background:#666;"></div>
<div class="a" style="left:810px;top:661px;width:70px;height:1px;background:#b8b8b8;"></div>
<div class="a" style="left:828px;top:657px;width:3px;height:8px;background:#555;"></div>
<svg class="a" style="left:880px;top:657px;" width="8" height="8" viewBox="0 0 8 8"><path d="M4 0 V8 M0 4 H8" stroke="#555" stroke-width="1.1"/></svg>
<div class="t" style="left:895.0px;top:657.4px;font-size:8px;line-height:8px;color:#555;transform:scaleX(0.9368);transform-origin:0 0;">57%</div>
<svg class="a" style="left:918px;top:656px;" width="11" height="11" viewBox="0 0 11 11"><rect x=".5" y=".5" width="10" height="10" fill="none" stroke="#777" stroke-width=".8"/><path d="M5.5 .5 V10.5 M.5 5.5 H10.5" stroke="#777" stroke-width=".8"/></svg>
<div class="a" style="left:38.5px;top:296px;width:71.0px;height:39.5px;background:#d4d4d4;"></div>
<div class="a" style="left:39.0px;top:296.5px;width:70.0px;height:38.5px;background:#fdfdfd;"></div>
<div class="a" style="left:39px;top:296.5px;width:19px;height:38.5px;background:linear-gradient(175deg,#2a2526 0%,#3a3435 30%,#2a2526 55%,#5a5354 75%,#b8b0b0 100%)"></div>
<div class="a" style="left:42px;top:304px;width:14px;height:1px;background:#8a8283;"></div>
<div class="a" style="left:41px;top:312px;width:16px;height:2px;background:#9a9293;"></div>
<div class="a" style="left:45px;top:322px;width:2px;height:4px;background:#ccc4c4;"></div>
<div class="a" style="left:50px;top:322px;width:2px;height:4px;background:#ccc4c4;"></div>
<div class="a" style="left:64px;top:309px;width:36px;height:1.5px;background:#8a8a90;"></div>
<div class="a" style="left:66px;top:313px;width:30px;height:1px;background:#a8a8b0;"></div>
<div class="a" style="left:65px;top:320px;width:23px;height:1px;background:#b4b4bc;"></div>
<div class="a" style="left:65px;top:324px;width:35px;height:1px;background:#b8b8c0;"></div>
<div class="a" style="left:65px;top:326.5px;width:25px;height:1.0px;background:#c0c0c8;"></div>
<div class="a" style="left:98px;top:297px;width:9px;height:9px;border-radius:50%;border:1.3px solid #4d8a7a;background:#e8efee"></div>
<div class="t" style="left:28.5px;top:294.9px;font-size:9.5px;line-height:9.5px;color:#6a6a6a;">1</div>
<div class="a" style="left:36.5px;top:346.5px;width:74.5px;height:44.5px;background:#e2785c;"></div>
<div class="a" style="left:38.5px;top:348.5px;width:71.0px;height:40.0px;background:#fdfdfd;"></div>
<div class="a" style="left:41px;top:352px;width:49px;height:1px;background:#c44848;"></div>
<div class="a" style="left:42px;top:355px;width:62px;height:1px;background:#a6b8cc;"></div>
<div class="a" style="left:42px;top:358px;width:62px;height:1px;background:#b6c6d6;"></div>
<div class="a" style="left:42px;top:361px;width:62px;height:1px;background:#b6c6d6;"></div>
<div class="a" style="left:42px;top:364px;width:53px;height:1px;background:#c0cde0;"></div>
<div class="a" style="left:42px;top:367px;width:20px;height:19px;background:#2d2c55;"></div>
<div class="a" style="left:44px;top:369px;width:13px;height:1px;background:#d8d860;"></div>
<div class="a" style="left:44px;top:373px;width:16px;height:1px;background:#b8b8d0;"></div>
<div class="a" style="left:44px;top:376px;width:16px;height:1px;background:#b8b8d0;"></div>
<div class="a" style="left:44px;top:379px;width:12px;height:1px;background:#a8a8c8;"></div>
<div class="a" style="left:63px;top:367px;width:20px;height:19px;background:#2d2c55;"></div>
<div class="a" style="left:65px;top:369px;width:13px;height:1px;background:#d8d860;"></div>
<div class="a" style="left:65px;top:373px;width:16px;height:1px;background:#b8b8d0;"></div>
<div class="a" style="left:65px;top:376px;width:16px;height:1px;background:#b8b8d0;"></div>
<div class="a" style="left:65px;top:379px;width:12px;height:1px;background:#a8a8c8;"></div>
<div class="a" style="left:84px;top:367px;width:20px;height:19px;background:#2d2c55;"></div>
<div class="a" style="left:86px;top:369px;width:13px;height:1px;background:#d8d860;"></div>
<div class="a" style="left:86px;top:373px;width:16px;height:1px;background:#b8b8d0;"></div>
<div class="a" style="left:86px;top:376px;width:16px;height:1px;background:#b8b8d0;"></div>
<div class="a" style="left:86px;top:379px;width:12px;height:1px;background:#a8a8c8;"></div>
<div class="t" style="left:28.5px;top:347.9px;font-size:9.5px;line-height:9.5px;color:#6a6a6a;">2</div>
<div class="a" style="left:38.5px;top:401.5px;width:71.0px;height:41.0px;background:#d6d6d6;"></div>
<div class="a" style="left:39px;top:402.0px;width:70px;height:40.0px;background:#fdfdfd;"></div>
<div class="a" style="left:39px;top:402.0px;width:8px;height:40px;background:linear-gradient(170deg,#555 0%,#1a1a1a 30%,#8a8a8a 55%,#222 75%,#999 100%)"></div>
<div class="t" style="left:28.0px;top:401.9px;font-size:9.5px;line-height:9.5px;color:#6a6a6a;">3</div>
<div class="a" style="left:50px;top:409.5px;width:25px;height:1.0px;background:#8a8aa0;"></div>
<div class="a" style="left:49px;top:415.5px;width:51px;height:1.0px;background:#c8c8d0;"></div>
<div class="a" style="left:49px;top:420.5px;width:41px;height:1.0px;background:#d0d0d8;"></div>
<div class="a" style="left:49px;top:427.5px;width:55px;height:1.0px;background:#c0c0c8;"></div>
<div class="a" style="left:49px;top:430.5px;width:55px;height:1.0px;background:#b0b0b8;"></div>
<div class="a" style="left:49px;top:433.5px;width:21px;height:1.0px;background:#c8c8c8;"></div>
<div class="a" style="left:38.5px;top:455.5px;width:71.0px;height:41.0px;background:#d6d6d6;"></div>
<div class="a" style="left:39px;top:456.0px;width:70px;height:40.0px;background:#fdfdfd;"></div>
<div class="t" style="left:28.0px;top:455.9px;font-size:9.5px;line-height:9.5px;color:#6a6a6a;">4</div>
<div class="a" style="left:41px;top:458.5px;width:66px;height:1.0px;background:#a0a0a8;"></div>
<div class="a" style="left:45px;top:464.5px;width:13px;height:1.0px;background:#8a8a8a;"></div>
<div class="a" style="left:50px;top:469.5px;width:45px;height:1.0px;background:#e0a0a8;"></div>
<div class="a" style="left:50px;top:472.5px;width:12px;height:1.0px;background:#d06070;"></div>
<div class="a" style="left:50px;top:475.5px;width:10px;height:1.0px;background:#c05060;"></div>
<div class="a" style="left:50px;top:479.5px;width:45px;height:1.0px;background:#c8c8d0;"></div>
<div class="a" style="left:50px;top:482.5px;width:45px;height:1.0px;background:#c0c0c8;"></div>
<div class="a" style="left:50px;top:485.5px;width:45px;height:1.0px;background:#c8c8d0;"></div>
<div class="a" style="left:50px;top:488.5px;width:20px;height:1.0px;background:#c8c8d0;"></div>
<div class="a" style="left:38.5px;top:508.5px;width:71.0px;height:41.0px;background:#d6d6d6;"></div>
<div class="a" style="left:39px;top:509.0px;width:70px;height:40.0px;background:#fdfdfd;"></div>
<div class="a" style="left:39px;top:509.0px;width:8px;height:40px;background:linear-gradient(170deg,#555 0%,#1a1a1a 30%,#8a8a8a 55%,#222 75%,#999 100%)"></div>
<div class="t" style="left:28.0px;top:508.9px;font-size:9.5px;line-height:9.5px;color:#6a6a6a;">5</div>
<div class="a" style="left:50px;top:513.5px;width:30px;height:1.0px;background:#7a5060;"></div>
<div class="a" style="left:50px;top:516.5px;width:12px;height:1.0px;background:#d05060;"></div>
<div class="a" style="left:50px;top:519.5px;width:20px;height:1.0px;background:#d0a0a8;"></div>
<div class="a" style="left:50px;top:522.5px;width:10px;height:1.0px;background:#b03050;"></div>
<div class="a" style="left:50px;top:526.5px;width:54px;height:1.0px;background:#c4c8d4;"></div>
<div class="a" style="left:50px;top:530.0px;width:46px;height:1.0px;background:#c4c8d4;"></div>
<div class="a" style="left:50px;top:533.5px;width:54px;height:1.0px;background:#c4c8d4;"></div>
<div class="a" style="left:50px;top:537.0px;width:46px;height:1.0px;background:#c4c8d4;"></div>
<div class="a" style="left:50px;top:540.5px;width:54px;height:1.0px;background:#c4c8d4;"></div>
<div class="a" style="left:38.5px;top:561.5px;width:71.0px;height:41.0px;background:#d6d6d6;"></div>
<div class="a" style="left:39px;top:562.0px;width:70px;height:40.0px;background:#fdfdfd;"></div>
<div class="a" style="left:39px;top:562.0px;width:8px;height:40px;background:linear-gradient(170deg,#555 0%,#1a1a1a 30%,#8a8a8a 55%,#222 75%,#999 100%)"></div>
<div class="t" style="left:28.0px;top:561.9px;font-size:9.5px;line-height:9.5px;color:#6a6a6a;">6</div>
<div class="a" style="left:50px;top:566.5px;width:30px;height:1.0px;background:#7a5060;"></div>
<div class="a" style="left:50px;top:569.5px;width:12px;height:1.0px;background:#d05060;"></div>
<div class="a" style="left:50px;top:572.5px;width:20px;height:1.0px;background:#d0a0a8;"></div>
<div class="a" style="left:50px;top:575.5px;width:10px;height:1.0px;background:#b03050;"></div>
<div class="a" style="left:50px;top:579.5px;width:54px;height:1.0px;background:#c4c8d4;"></div>
<div class="a" style="left:50px;top:583.0px;width:46px;height:1.0px;background:#c4c8d4;"></div>
<div class="a" style="left:50px;top:586.5px;width:54px;height:1.0px;background:#c4c8d4;"></div>
<div class="a" style="left:50px;top:590.0px;width:46px;height:1.0px;background:#c4c8d4;"></div>
<div class="a" style="left:50px;top:593.5px;width:54px;height:1.0px;background:#c4c8d4;"></div>
<div class="a" style="left:38.5px;top:615.5px;width:71.0px;height:37.5px;background:#d6d6d6;"></div>
<div class="a" style="left:39px;top:616.0px;width:70px;height:37.0px;background:#fdfdfd;"></div>
<div class="a" style="left:39px;top:616.0px;width:8px;height:37.0px;background:linear-gradient(170deg,#555 0%,#1a1a1a 30%,#8a8a8a 55%,#222 75%,#999 100%)"></div>
<div class="t" style="left:28.0px;top:615.9px;font-size:9.5px;line-height:9.5px;color:#6a6a6a;">7</div>
<div class="a" style="left:50px;top:620.5px;width:30px;height:1.0px;background:#7a5060;"></div>
<div class="a" style="left:50px;top:623.5px;width:12px;height:1.0px;background:#d05060;"></div>
<div class="a" style="left:50px;top:626.5px;width:20px;height:1.0px;background:#d0a0a8;"></div>
<div class="a" style="left:50px;top:629.5px;width:10px;height:1.0px;background:#b03050;"></div>
<div class="a" style="left:50px;top:633.5px;width:54px;height:1.0px;background:#c4c8d4;"></div>
<div class="a" style="left:50px;top:637.0px;width:46px;height:1.0px;background:#c4c8d4;"></div>
<div class="a" style="left:50px;top:640.5px;width:54px;height:1.0px;background:#c4c8d4;"></div>
<div class="a" style="left:50px;top:644.0px;width:46px;height:1.0px;background:#c4c8d4;"></div>
<div class="a" style="left:50px;top:647.5px;width:54px;height:1.0px;background:#c4c8d4;"></div>
<div class="a" style="left:144px;top:303px;width:578px;height:325px;background:#fdfcfb;"></div>
<div class="t" style="left:172.0px;top:319.5px;font-size:19.5px;line-height:19.5px;color:#b8141c;font-weight:bold;transform:scaleX(1.0352);transform-origin:0 0;">Definition of Smart Health System</div>
<div class="t" style="left:183.0px;top:350.2px;font-size:11px;line-height:11px;color:#2b6aa6;transform:scaleX(1.0228);transform-origin:0 0;-webkit-text-stroke:0.15px #2b6aa6;">An advanced, data-driven healthcare ecosystem that leverages modern technology and connectivity</div>
<svg class="a" style="left:172px;top:351px;" width="8" height="9" viewBox="0 0 8 9"><path d="M0 0 L8 4.5 L0 9 L3 4.5 Z" fill="#2f6a8c"/></svg>
<div class="t" style="left:183.0px;top:362.8px;font-size:11px;line-height:11px;color:#2b6aa6;transform:scaleX(0.9923);transform-origin:0 0;-webkit-text-stroke:0.15px #2b6aa6;">to improve health outcomes across all levels.</div>
<div class="t" style="left:183.0px;top:376.0px;font-size:11px;line-height:11px;color:#2b6aa6;transform:scaleX(1.0228);transform-origin:0 0;-webkit-text-stroke:0.15px #2b6aa6;">often described as a “hyperconnected and intelligent” network of devices and platforms that harness</div>
<svg class="a" style="left:172px;top:376.8px;" width="8" height="9" viewBox="0 0 8 9"><path d="M0 0 L8 4.5 L0 9 L3 4.5 Z" fill="#2f6a8c"/></svg>
<div class="t" style="left:183.0px;top:388.9px;font-size:11px;line-height:11px;color:#2b6aa6;transform:scaleX(1.0014);transform-origin:0 0;-webkit-text-stroke:0.15px #2b6aa6;">the explosion of health data.</div>
<div class="t" style="left:183.0px;top:402.0px;font-size:11px;line-height:11px;color:#2b6aa6;transform:scaleX(1.0372);transform-origin:0 0;-webkit-text-stroke:0.15px #2b6aa6;">In practical terms, a smart health system builds on the interoperability of digital health technologies</div>
<svg class="a" style="left:172px;top:402.8px;" width="8" height="9" viewBox="0 0 8 9"><path d="M0 0 L8 4.5 L0 9 L3 4.5 Z" fill="#2f6a8c"/></svg>
<div class="t" style="left:183.0px;top:414.7px;font-size:11px;line-height:11px;color:#2b6aa6;transform:scaleX(1.0241);transform-origin:0 0;-webkit-text-stroke:0.15px #2b6aa6;">(electronic records, apps, wearables, etc.) combined with big data analytics and artificial intelligence</div>
<div class="t" style="left:183.0px;top:428.2px;font-size:11px;line-height:11px;color:#2b6aa6;transform:scaleX(1.0054);transform-origin:0 0;-webkit-text-stroke:0.15px #2b6aa6;">(AI) to collect and analyze information and provide proactive support.</div>
<svg class="a" style="left:290px;top:386px;" width="79" height="3" viewBox="0 0 79 3"><path d="M0 2 L2 0.5 L4 2 L6 0.5 L8 2 L10 0.5 L12 2 L14 0.5 L16 2 L18 0.5 L20 2 L22 0.5 L24 2 L26 0.5 L28 2 L30 0.5 L32 2 L34 0.5 L36 2 L38 0.5 L40 2 L42 0.5 L44 2 L46 0.5 L48 2 L50 0.5 L52 2 L54 0.5 L56 2 L58 0.5 L60 2 L62 0.5 L64 2 L66 0.5 L68 2 L70 0.5 L72 2 L74 0.5 L76 2 L78 0.5" fill="none" stroke="#e05050" stroke-width=".7"/></svg>
<div class="a" style="left:171px;top:461px;width:166px;height:147px;background:#2f2e54;"></div>
<div class="a" style="left:346px;top:461px;width:165px;height:147px;background:#2f2e54;"></div>
<div class="a" style="left:521px;top:461px;width:165px;height:143px;background:#2f2e54;"></div>
<div class="t" style="left:179.0px;top:469.2px;font-size:11px;line-height:11px;color:#e8f03a;font-weight:bold;transform:scaleX(0.9450);transform-origin:0 0;">Beyond isolated digital tools</div>
<div class="t" style="left:359.6px;top:469.0px;font-size:12px;line-height:12px;color:#e8f03a;font-weight:bold;transform:scaleX(0.9464);transform-origin:0 0;">Patient-centered Care</div>
<div class="t" style="left:535.6px;top:470.2px;font-size:12px;line-height:12px;color:#e8f03a;font-weight:bold;transform:scaleX(0.9110);transform-origin:0 0;">Holistic Transformation</div>
<div class="t" style="left:184px;top:492.7px;width:153.9px;font-size:11px;line-height:11px;color:#f2f2f6;text-align:justify;text-align-last:justify;transform:scaleX(0.9700);transform-origin:0 0;white-space:normal;height:11px;overflow:visible;-webkit-text-stroke:0.2px #f2f2f6">creates an integrated,</div>
<div class="t" style="left:184px;top:505.3px;width:153.9px;font-size:11px;line-height:11px;color:#f2f2f6;font-weight:bold;text-align:justify;text-align-last:justify;transform:scaleX(0.9700);transform-origin:0 0;white-space:normal;height:11px;overflow:visible;-webkit-text-stroke:0.2px #f2f2f6">intelligent health ecosystem</div>
<div class="t" style="left:184px;top:518.9px;width:153.9px;font-size:11px;line-height:11px;color:#f2f2f6;text-align:justify;text-align-last:justify;transform:scaleX(0.9700);transform-origin:0 0;white-space:normal;height:11px;overflow:visible;-webkit-text-stroke:0.2px #f2f2f6">spanning personal, clinical,</div>
<div class="t" style="left:184.0px;top:531.2px;font-size:11px;line-height:11px;color:#f2f2f6;transform:scaleX(1.0048);transform-origin:0 0;-webkit-text-stroke:0.2px #f2f2f6;">and public health domains.</div>
<div class="a" style="left:346px;top:461px;width:165px;height:147px;overflow:hidden">
<div class="t" style="left:12px;top:31.5px;font-size:11px;line-height:11px;color:#f2f2f6;transform:scaleX(1.0);transform-origin:0 0;-webkit-text-stroke:0.2px #f2f2f6">represents a shift from episodic</div>
</div>
<div class="t" style="left:355.8px;top:505.1px;font-size:11px;line-height:11px;color:#f2f2f6;transform:scaleX(1.0186);transform-origin:0 0;-webkit-text-stroke:0.2px #f2f2f6;">provider-driven care to</div>
<div class="t" style="left:355.8px;top:518.2px;font-size:11px;line-height:11px;color:#f2f2f6;transform:scaleX(0.94);transform-origin:0 0;-webkit-text-stroke:0.2px #f2f2f6">continuous, <b>patient-centered</b></div>
<div class="t" style="left:355.8px;top:531.2px;font-size:11px;line-height:11px;color:#f2f2f6;transform:scaleX(0.9856);transform-origin:0 0;-webkit-text-stroke:0.2px #f2f2f6;">care, enabling personalized</div>
<div class="t" style="left:355.8px;top:544.2px;font-size:11px;line-height:11px;color:#f2f2f6;transform:scaleX(1.0245);transform-origin:0 0;-webkit-text-stroke:0.2px #f2f2f6;">interventions and predictive</div>
<div class="t" style="left:355.8px;top:557.2px;font-size:11px;line-height:11px;color:#f2f2f6;transform:scaleX(1.0049);transform-origin:0 0;-webkit-text-stroke:0.2px #f2f2f6;">insights that help people lead</div>
<div class="t" style="left:355.8px;top:570.2px;font-size:11px;line-height:11px;color:#f2f2f6;transform:scaleX(1.0055);transform-origin:0 0;-webkit-text-stroke:0.2px #f2f2f6;">healthier lives.</div>
<div class="t" style="left:524.5px;top:491.5px;width:154.3px;font-size:11px;line-height:11px;color:#f2f2f6;text-align:justify;text-align-last:justify;transform:scaleX(0.9700);transform-origin:0 0;white-space:normal;height:11px;overflow:visible;-webkit-text-stroke:0.2px #f2f2f6">Not defined by technology</div>
<div class="t" style="left:524.5px;top:504.4px;width:154.3px;font-size:11px;line-height:11px;color:#f2f2f6;text-align:justify;text-align-last:justify;transform:scaleX(0.9700);transform-origin:0 0;white-space:normal;height:11px;overflow:visible;-webkit-text-stroke:0.2px #f2f2f6">alone but by holistic</div>
<div class="t" style="left:524.5px;top:517.7px;width:154.3px;font-size:11px;line-height:11px;color:#f2f2f6;text-align:justify;text-align-last:justify;transform:scaleX(0.9700);transform-origin:0 0;white-space:normal;height:11px;overflow:visible;-webkit-text-stroke:0.2px #f2f2f6">transformation of healthcare</div>
<div class="t" style="left:524.5px;top:530.4px;width:154.3px;font-size:11px;line-height:11px;color:#f2f2f6;text-align:justify;text-align-last:justify;transform:scaleX(0.9700);transform-origin:0 0;white-space:normal;height:11px;overflow:visible;-webkit-text-stroke:0.2px #f2f2f6">processes, culture, and</div>
<div class="t" style="left:524.5px;top:543.7px;width:154.3px;font-size:11px;line-height:11px;color:#f2f2f6;text-align:justify;text-align-last:justify;transform:scaleX(0.9700);transform-origin:0 0;white-space:normal;height:11px;overflow:visible;-webkit-text-stroke:0.2px #f2f2f6">governance to be</div>
<div class="t" style="left:524.5px;top:556.1px;width:154.3px;font-size:11px;line-height:11px;color:#f2f2f6;text-align:justify;text-align-last:justify;transform:scaleX(0.9700);transform-origin:0 0;white-space:normal;height:11px;overflow:visible;-webkit-text-stroke:0.2px #f2f2f6">collaborative, information rich</div>
<div class="t" style="left:524.5px;top:569.4px;width:154.3px;font-size:11px;line-height:11px;color:#f2f2f6;text-align:justify;text-align-last:justify;transform:scaleX(0.9700);transform-origin:0 0;white-space:normal;height:11px;overflow:visible;-webkit-text-stroke:0.2px #f2f2f6">and responsive across all</div>
<div class="t" style="left:524.5px;top:581.8px;font-size:11px;line-height:11px;color:#f2f2f6;transform:scaleX(0.8666);transform-origin:0 0;-webkit-text-stroke:0.2px #f2f2f6;">settings.</div>
<div class="a" style="left:741px;top:283px;width:192px;height:371px;background:#e9e9e9;"></div>
<div class="a" style="left:741px;top:283px;width:1px;height:371px;background:#d3d3d3;"></div>
<div class="t" style="left:752.4px;top:293.9px;font-size:14px;line-height:14px;color:#c96a5c;transform:scaleX(0.9720);transform-origin:0 0;">Format Background</div>
<svg class="a" style="left:906px;top:296px;" width="7" height="4" viewBox="0 0 7 4"><path d="M0 0 H7 L3.5 4 Z" fill="#666"/></svg>
<svg class="a" style="left:917px;top:295px;" width="8" height="8" viewBox="0 0 8 8"><path d="M.5 .5 L7.5 7.5 M7.5 .5 L.5 7.5" stroke="#555" stroke-width="1.2"/></svg>
<svg class="a" style="left:755px;top:310px;" width="18" height="18" viewBox="0 0 18 18"><path d="M2 9 L8 3 L14 9 L8 15 Z" fill="#fff" stroke="#777" stroke-width="1"/><path d="M8 3 V1" stroke="#c44" stroke-width="1"/><path d="M12 3 Q17 5 16 12" fill="none" stroke="#c6424a" stroke-width="2"/><circle cx="8" cy="6" r="1" fill="#c44"/></svg>
<div class="a" style="left:752px;top:338px;width:169px;height:1px;background:#dadada;"></div>
<svg class="a" style="left:757px;top:346px;" width="5" height="5" viewBox="0 0 5 5"><path d="M5 0 V5 H0 Z" fill="#444"/></svg>
<div class="t" style="left:766.8px;top:344.6px;font-size:8.5px;line-height:8.5px;color:#c0352c;transform:scaleX(0.8933);transform-origin:0 0;">Fill</div>
<div class="a" style="left:767.5px;top:364.2px;width:7.6px;height:7.6px;border-radius:50%;background:#fafafa;border:.6px solid #cfcfcf"></div>
<div class="t" style="left:778.7px;top:363.9px;font-size:8.5px;line-height:8.5px;color:#3c3c3c;transform:scaleX(0.9423);transform-origin:0 0;">Solid fill</div>
<div class="a" style="left:767.5px;top:379.4px;width:7.6px;height:7.6px;border-radius:50%;background:#fafafa;border:.6px solid #cfcfcf"></div>
<div class="t" style="left:778.7px;top:379.1px;font-size:8.5px;line-height:8.5px;color:#3c3c3c;transform:scaleX(0.9444);transform-origin:0 0;">Gradient fill</div>
<div class="a" style="left:767.5px;top:393.8px;width:7.6px;height:7.6px;border-radius:50%;background:#fafafa;border:.6px solid #cfcfcf"></div>
<div class="t" style="left:778.7px;top:393.5px;font-size:8.5px;line-height:8.5px;color:#3c3c3c;transform:scaleX(0.9479);transform-origin:0 0;">Picture or texture fill</div>
<div class="a" style="left:767.5px;top:408.5px;width:7.6px;height:7.6px;border-radius:50%;background:#fafafa;border:.6px solid #cfcfcf"></div>
<div class="t" style="left:778.7px;top:408.2px;font-size:8.5px;line-height:8.5px;color:#3c3c3c;transform:scaleX(0.9419);transform-origin:0 0;">Pattern fill</div>
<div class="a" style="left:770px;top:366.2px;width:3.6px;height:3.6px;border-radius:50%;background:#444"></div>
<div class="a" style="left:766px;top:424px;width:9px;height:9.5px;background:#8a8a8a;"></div>
<div class="a" style="left:767px;top:425px;width:7px;height:7.5px;background:#fbfbfb;"></div>
<div class="t" style="left:778.7px;top:424.4px;font-size:8.5px;line-height:8.5px;color:#3c3c3c;transform:scaleX(0.9437);transform-origin:0 0;">Hide background graphics</div>
<div class="t" style="left:773.3px;top:449.9px;font-size:8.5px;line-height:8.5px;color:#3c3c3c;transform:scaleX(0.9009);transform-origin:0 0;">Color</div>
<div class="a" style="left:880px;top:445px;width:30px;height:17.5px;background:#c8c8c8;"></div>
<div class="a" style="left:881px;top:446px;width:28px;height:15.5px;background:#fafafa;"></div>
<svg class="a" style="left:888px;top:449px;" width="10" height="10" viewBox="0 0 10 10"><path d="M1 5 L5 1 L9 5 L5 9 Z" fill="none" stroke="#777" stroke-width=".9"/></svg>
<svg class="a" style="left:901px;top:452px;" width="6" height="3" viewBox="0 0 6 3"><path d="M0 0 H6 L3 3 Z" fill="#666"/></svg>
<div class="t" style="left:773.3px;top:469.9px;font-size:8.5px;line-height:8.5px;color:#3c3c3c;transform:scaleX(0.8886);transform-origin:0 0;">Transparency</div>
<div class="a" style="left:826px;top:469px;width:1px;height:9px;background:#666;"></div>
<div class="a" style="left:827px;top:473px;width:29px;height:1px;background:#aaa;"></div>
<div class="a" style="left:861px;top:467px;width:49px;height:13.5px;background:#c8c8c8;"></div>
<div class="a" style="left:862px;top:468px;width:47px;height:11.5px;background:#fbfbfb;"></div>
<div class="t" style="left:865.0px;top:470.2px;font-size:8px;line-height:8px;color:#555;transform:scaleX(0.9514);transform-origin:0 0;">0%</div>
<svg class="a" style="left:902px;top:469px;" width="5" height="10" viewBox="0 0 5 10"><path d="M0 3 L2.5 0 L5 3 Z M0 7 L2.5 10 L5 7 Z" fill="#777"/></svg>
<div class="a" style="left:752px;top:625px;width:53px;height:16px;background:#a8a8a8;"></div>
<div class="a" style="left:753px;top:626px;width:51px;height:14px;background:#fdfdfd;"></div>
<div class="t" style="left:758.0px;top:629.6px;font-size:8.5px;line-height:8.5px;color:#333;transform:scaleX(0.9987);transform-origin:0 0;">Apply to All</div>
<div class="a" style="left:810px;top:625px;width:75px;height:16px;background:#f1f1f1;"></div>
<div class="t" style="left:817.0px;top:629.6px;font-size:8.5px;line-height:8.5px;color:#c0c0c0;transform:scaleX(0.9009);transform-origin:0 0;">Reset Background</div>
<svg class="a" style="left:962px;top:124px;" width="13" height="11" viewBox="0 0 13 11"><circle cx="4.5" cy="3" r="2.6" fill="#e6e9ee"/><circle cx="9.8" cy="3.6" r="2.1" fill="#e6e9ee"/><path d="M0 10.5 Q0 6.5 4.5 6.5 Q9 6.5 9 10.5 Z" fill="#e6e9ee"/><path d="M9.5 6.8 Q13 6.8 13 10 V10.5 H10" fill="#e6e9ee"/></svg>
<div class="t" style="right:20.0px;top:121.2px;font-size:13px;line-height:15.6px;color:#e6e8ec;direction:rtl;">کاربران</div>
<div class="a" style="left:968px;top:155px;width:40px;height:35px;border-radius:6px;background:#1d2531"></div>
<svg class="a" style="left:980px;top:165px;" width="16" height="15" viewBox="0 0 16 15"><path d="M0.5 0.5 H15.5 L9.5 7.5 V14.5 L6.5 12.5 V7.5 Z" fill="#eef0f3"/></svg>
<div class="a" style="left:1016px;top:155px;width:117px;height:35px;border-radius:6px;background:#393f4a"></div>
<svg class="a" style="left:1066px;top:163px;" width="16" height="19" viewBox="0 0 16 19"><g transform="scale(0.8)" fill="#c9ccd1"><rect x="3.2" y="5" width="3.4" height="11" rx="1.7"/><rect x="7" y="0.8" width="3.4" height="14" rx="1.7"/><rect x="10.8" y="1.8" width="3.4" height="13" rx="1.7"/><rect x="14.5" y="5" width="3.3" height="11" rx="1.65"/><path d="M3.2 12 H17.8 V16 Q17.8 23 11 23 H9 Q6 23 4 20 L0.6 15.2 Q0 14 1.2 13.6 Q2.3 13.3 3.2 14.5 Z"/></g></svg>
<div class="a" style="left:1141px;top:155px;width:116px;height:35px;border-radius:7px;background:#1b232e;border:1.5px solid #2aa7cc"></div>
<svg class="a" style="left:1180px;top:165px;" width="18" height="15" viewBox="0 0 18 15"><circle cx="6" cy="4" r="3.3" fill="#33b4da"/><circle cx="13" cy="4.8" r="2.6" fill="#33b4da"/><path d="M0 14.5 Q0 9 6 9 Q12 9 12 14.5 Z" fill="#33b4da"/><path d="M11 9.2 Q18 8.8 18 13.5 V14.5 H12.5" fill="#33b4da"/></svg>
<div class="t" style="left:1208.0px;top:165.5px;font-size:12.5px;line-height:12.5px;color:#38b6da;transform:scaleX(0.8271);transform-origin:0 0;-webkit-text-stroke:0.4px #38b6da;">51</div>
<svg class="a" style="left:1235px;top:209px;" width="14" height="14" viewBox="0 0 14 14"><circle cx="7" cy="4" r="3.3" fill="#f0b72a"/><path d="M0.5 13.5 Q0.5 8.5 7 8.5 Q13.5 8.5 13.5 13.5 Z" fill="#f0b72a"/></svg>
<div class="t" style="left:1193.7px;top:207.5px;font-size:13.6px;line-height:13.6px;color:#e6e8ec;">Guest</div>
<svg class="a" style="left:1235px;top:245px;" width="14" height="14" viewBox="0 0 14 14"><circle cx="7" cy="4" r="3.3" fill="#f0b72a"/><path d="M0.5 13.5 Q0.5 8.5 7 8.5 Q13.5 8.5 13.5 13.5 Z" fill="#f0b72a"/></svg>
<div class="t" style="right:50.0px;top:241.6px;font-size:14px;line-height:16.8px;color:#e6e8ec;direction:rtl;">دکتر محمد رضا هنرور</div>
<svg class="a" style="left:1235px;top:281px;" width="14" height="14" viewBox="0 0 14 14"><circle cx="7" cy="4" r="3.3" fill="#f0b72a"/><path d="M0.5 13.5 Q0.5 8.5 7 8.5 Q13.5 8.5 13.5 13.5 Z" fill="#f0b72a"/></svg>
<div class="t" style="right:50.0px;top:277.6px;font-size:14px;line-height:16.8px;color:#e6e8ec;direction:rtl;">مهمان</div>
<svg class="a" style="left:1235px;top:317px;" width="14" height="14" viewBox="0 0 14 14"><circle cx="7" cy="4" r="3.3" fill="#f0b72a"/><path d="M0.5 13.5 Q0.5 8.5 7 8.5 Q13.5 8.5 13.5 13.5 Z" fill="#f0b72a"/></svg>
<div class="t" style="left:1197.5px;top:315.5px;font-size:13.6px;line-height:13.6px;color:#e6e8ec;">naziri</div>
<svg class="a" style="left:1235px;top:353px;" width="14" height="14" viewBox="0 0 14 14"><circle cx="7" cy="4" r="3.3" fill="#f0b72a"/><path d="M0.5 13.5 Q0.5 8.5 7 8.5 Q13.5 8.5 13.5 13.5 Z" fill="#f0b72a"/></svg>
<div class="t" style="left:1130.2px;top:351.5px;font-size:13.6px;line-height:13.6px;color:#e6e8ec;">shokofeh banaei</div>
<div class="a" style="left:960px;top:380px;width:304px;height:12px;overflow:hidden">
<div class="t" style="right:34px;top:5.5px;font-size:13.6px;line-height:13px;color:#e6e8ec">saeed soroori</div>
<svg class="a" style="left:275px;top:9px" width="14" height="14"><circle cx="7" cy="4" r="3.3" fill="#f0b72a"/></svg>
</div>
<svg class="a" style="left:962px;top:426px;" width="14" height="13" viewBox="0 0 14 13"><path d="M2 .5 H12 Q13.5 .5 13.5 2 V8.5 Q13.5 10 12 10 H5 L1.5 13 V10 Q.5 10 .5 8.5 V2 Q.5 .5 2 .5 Z" fill="#e6e9ee"/><rect x="4" y="3.5" width="5" height="1.2" fill="#22334a"/><rect x="4" y="6" width="6" height="1.2" fill="#22334a"/></svg>
<div class="t" style="right:41.0px;top:425.9px;font-size:13.5px;line-height:16.2px;color:#e6e8ec;direction:rtl;">پیام‌ها</div>
<div class="a" style="left:1251.5px;top:425.0px;width:4.2px;height:4.2px;border-radius:50%;background:#dfe3e8"></div>
<div class="a" style="left:1251.5px;top:429.8px;width:4.2px;height:4.2px;border-radius:50%;background:#dfe3e8"></div>
<div class="a" style="left:1251.5px;top:434.6px;width:4.2px;height:4.2px;border-radius:50%;background:#dfe3e8"></div>
<div class="a" style="left:960px;top:449px;width:304px;height:10px;overflow:hidden">
<svg class="a" style="left:8px;top:-8px" width="14" height="14"><circle cx="7" cy="4" r="3.3" fill="#f0b72a"/><path d="M0.5 13.5 Q0.5 8.5 7 8.5 Q13.5 8.5 13.5 13.5 Z" fill="#f0b72a"/></svg>
<div class="a" style="left:43px;top:0px;width:3px;height:3px;background:#e6e8ec"></div>
</div>
<div class="a" style="left:969px;top:463px;width:124px;height:34px;border-radius:6px;background:#2a2f3a"></div>
<div class="t" style="right:194.0px;top:471.6px;font-size:14px;line-height:16.8px;color:#e6e8ec;direction:rtl;">سلام</div>
<svg class="a" style="left:967px;top:526px;" width="14" height="14" viewBox="0 0 14 14"><circle cx="7" cy="4" r="3.3" fill="#f0b72a"/><path d="M0.5 13.5 Q0.5 8.5 7 8.5 Q13.5 8.5 13.5 13.5 Z" fill="#f0b72a"/></svg>
<div class="t" style="left:989.5px;top:523.3px;font-size:13px;line-height:13px;color:#e6e8ec;font-weight:bold;transform:scaleX(0.9679);transform-origin:0 0;">mohammad reza</div>
<div class="t" style="right:147.5px;top:522.3px;font-size:12px;line-height:14.4px;color:#9ea3ab;direction:rtl;">۱۱:۴۶</div>
<div class="a" style="left:969px;top:546px;width:169px;height:35px;border-radius:6px;background:#2a2f3a"></div>
<div class="t" style="left:980.0px;top:557.5px;font-size:12.5px;line-height:12.5px;color:#e6e8ec;">1</div>
<svg class="a" style="left:967px;top:604px;" width="14" height="14" viewBox="0 0 14 14"><circle cx="7" cy="4" r="3.3" fill="#f0b72a"/><path d="M0.5 13.5 Q0.5 8.5 7 8.5 Q13.5 8.5 13.5 13.5 Z" fill="#f0b72a"/></svg>
<div class="t" style="left:989.5px;top:601.8px;font-size:13px;line-height:13px;color:#e6e8ec;font-weight:bold;transform:scaleX(0.9886);transform-origin:0 0;">sajad lak</div>
<div class="t" style="right:193.0px;top:600.8px;font-size:12px;line-height:14.4px;color:#9ea3ab;direction:rtl;">۱۱:۴۶</div>
<div class="a" style="left:969px;top:625px;width:124px;height:34px;border-radius:6px;background:#2a2f3a"></div>
<div class="t" style="right:194.0px;top:633.6px;font-size:14px;line-height:16.8px;color:#e6e8ec;direction:rtl;">سجاد لک</div>
<svg class="a" style="left:967px;top:677px;" width="22" height="19" viewBox="0 0 22 19"><path d="M21.5 0.5 L0.5 9.5 L21.5 18.5 L16 9.5 Z" fill="#5f6b7d"/></svg>
<div class="t" style="right:60.0px;top:677.2px;font-size:13px;line-height:15.6px;color:#b9bdc4;direction:rtl;">پیام خود را بنویسید</div>
<div class="a" style="left:1232px;top:672px;width:29px;height:29px;border-radius:6px;background:#1f2b3b"></div>
<svg class="a" style="left:1237px;top:677px;" width="21" height="21" viewBox="0 0 21 21"><circle cx="10.5" cy="10.5" r="9.2" fill="none" stroke="#eef0f3" stroke-width="2.2"/><circle cx="7.3" cy="8" r="1.5" fill="#eef0f3"/><circle cx="13.7" cy="8" r="1.5" fill="#eef0f3"/><path d="M5.5 11.5 H15.5 Q15 16 10.5 16 Q6 16 5.5 11.5 Z" fill="#eef0f3"/></svg>
</body></html>
